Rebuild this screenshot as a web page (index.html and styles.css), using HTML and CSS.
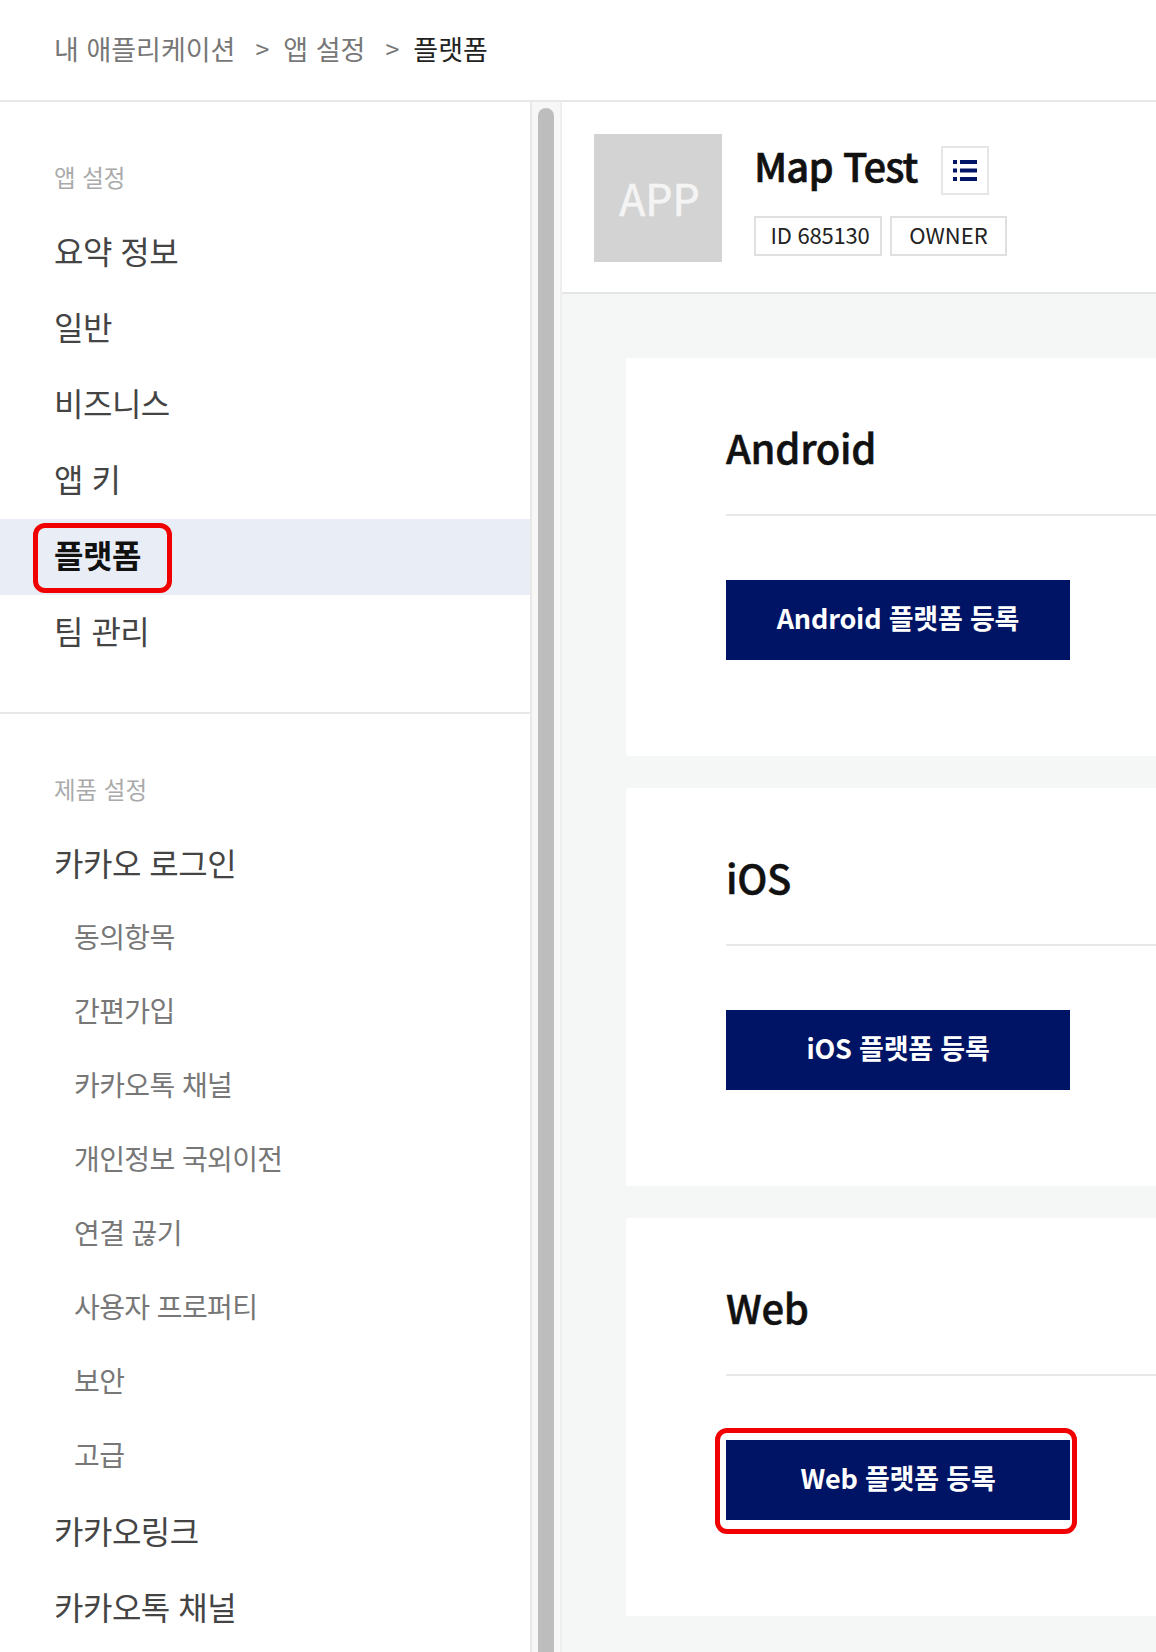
FILE: index.html
```html
<!DOCTYPE html>
<html lang="ko">
<head>
    <meta charset="UTF-8">
    <meta name="viewport" content="width=device-width, initial-scale=1.0">
    <title>플랫폼</title>
    <link rel="stylesheet" href="styles.css">
</head>
<body>
    <div class="breadcrumb">
        <span>내 애플리케이션</span>
        <span class="sep">&gt;</span>
        <span>앱 설정</span>
        <span class="sep">&gt;</span>
        <span class="current">플랫폼</span>
    </div>

    <div class="layout">
        <div class="sidebar">
            <div class="nav-section first">
                <div class="nav-label">앱 설정</div>
                <div class="nav-item">요약 정보</div>
                <div class="nav-item">일반</div>
                <div class="nav-item">비즈니스</div>
                <div class="nav-item">앱 키</div>
                <div class="nav-item active">플랫폼<span class="mark mark-nav"></span></div>
                <div class="nav-item">팀 관리</div>
            </div>
            <div class="nav-section">
                <div class="nav-label">제품 설정</div>
                <div class="nav-item">카카오 로그인</div>
                <div class="nav-sub">
                    <div class="sub-item">동의항목</div>
                    <div class="sub-item">간편가입</div>
                    <div class="sub-item">카카오톡 채널</div>
                    <div class="sub-item">개인정보 국외이전</div>
                    <div class="sub-item">연결 끊기</div>
                    <div class="sub-item">사용자 프로퍼티</div>
                    <div class="sub-item">보안</div>
                    <div class="sub-item">고급</div>
                </div>
                <div class="nav-item">카카오링크</div>
                <div class="nav-item">카카오톡 채널</div>
            </div>
        </div>

        <div class="scroll-track"><div class="scroll-thumb"></div></div>

        <div class="main">
            <div class="app-header">
                <div class="app-icon">APP</div>
                <div class="app-info">
                    <div class="app-title">
                        <h1>Map Test</h1>
                        <div class="list-button">
                            <svg width="24" height="21" viewBox="0 0 24 21">
                                <path fill="#001466" d="M0 0h4v4H0zM7 0h17v4H7zM0 8.500h4v4H0zM7 8.500h17v4H7zM0 17h4v4H0zM7 17h17v4H7z"/>
                            </svg>
                        </div>
                    </div>
                    <div class="tags">
                        <span class="tag tag-id">ID 685130</span>
                        <span class="tag tag-owner">OWNER</span>
                    </div>
                </div>
            </div>

            <div class="content">
                <div class="card">
                    <h2>Android</h2>
                    <div class="card-body">
                        <div class="register">Android 플랫폼 등록</div>
                    </div>
                </div>
                <div class="card">
                    <h2>iOS</h2>
                    <div class="card-body">
                        <div class="register">iOS 플랫폼 등록</div>
                    </div>
                </div>
                <div class="card">
                    <h2>Web</h2>
                    <div class="card-body">
                        <div class="register">Web 플랫폼 등록<span class="mark mark-button"></span></div>
                    </div>
                </div>
            </div>
        </div>
    </div>
</body>
</html>
```

FILE: styles.css
```css
* {
    box-sizing: border-box;
}
html, body {
    margin: 0;
    height: 1652px;
    overflow: hidden;
}
body {
    font-family: "Noto Sans CJK KR", "Noto Sans", sans-serif;
    background-color: #fff;
    color: #111;
}

.breadcrumb {
    display: flex;
    align-items: center;
    height: 102px;
    padding: 0 0 4px 54px;
    border-bottom: 2px solid #e8e8e8;
    font-size: 27px;
    color: #777;
}
.breadcrumb .sep {
    margin: 0 14px 0 20px;
    font-size: 25px;
}
.breadcrumb .current {
    color: #222;
}

.layout {
    display: flex;
    height: 1550px;
}

.sidebar {
    width: 532px;
    flex-shrink: 0;
    border-right: 2px solid #e8e8e8;
}
.nav-section {
    padding-top: 55px;
}
.nav-section.first {
    padding-bottom: 41px;
    border-bottom: 2px solid #e8e8e8;
}
.nav-label {
    height: 40px;
    line-height: 40px;
    margin-bottom: 18px;
    padding-left: 54px;
    font-size: 23.500px;
    color: #aaa;
}
.nav-item {
    position: relative;
    height: 76px;
    line-height: 70px;
    padding-left: 54px;
    font-size: 32px;
    letter-spacing: -0.5px;
    color: #444;
}
.nav-item.active {
    background-color: #e9edf5;
    font-weight: 700;
    color: #111;
}
.nav-sub {
    margin-top: -4px;
    margin-bottom: 4px;
}
.sub-item {
    height: 74px;
    line-height: 74px;
    padding-left: 74px;
    font-size: 28px;
    letter-spacing: -0.6px;
    color: #777;
}

.scroll-track {
    width: 30px;
    flex-shrink: 0;
    padding: 6px 0 0 6px;
    background-color: #f7f7f7;
    border-right: 2px solid #efefef;
}
.scroll-thumb {
    width: 16px;
    height: 100%;
    background-color: #bdbdbd;
    border-radius: 8px 8px 0 0;
}

.main {
    flex: 1;
    min-width: 0;
    background-color: #f5f7f7;
}
.app-header {
    display: flex;
    height: 192px;
    padding: 32px 0 0 32px;
    background-color: #fff;
    border-bottom: 2px solid #e4e6e6;
}
.app-icon {
    width: 128px;
    height: 128px;
    padding-left: 3px;
    line-height: 126px;
    background-color: #d3d3d3;
    color: #f4f4f4;
    text-align: center;
    font-size: 43px;
    -webkit-text-stroke: 0.6px #f4f4f4;
}
.app-info {
    margin-left: 32px;
}
.app-title {
    display: flex;
    align-items: center;
    height: 72px;
    margin-bottom: 10px;
}
.app-title h1 {
    margin: 0 0 10px;
    font-size: 40px;
    font-weight: 500;
    line-height: 60px;
    letter-spacing: -0.9px;
    -webkit-text-stroke: 0.6px #111;
}
.list-button {
    display: flex;
    align-items: center;
    justify-content: center;
    width: 48px;
    height: 49px;
    margin-left: 23px;
    border: 2px solid #e6e6e6;
}
.tags {
    display: flex;
    gap: 8px;
}
.tag {
    display: block;
    height: 40px;
    line-height: 32px;
    border: 2px solid #e0e0e0;
    text-align: center;
    font-size: 22px;
    color: #222;
}
.tag-id {
    width: 128px;
    padding-left: 4px;
    letter-spacing: -0.2px;
}
.tag-owner {
    width: 117px;
}

.content {
    display: flex;
    flex-direction: column;
    gap: 32px;
    width: 900px;
    padding: 64px 0 0 64px;
}
.card {
    height: 398px;
    padding: 0 0 0 100px;
    background-color: #fff;
    border-radius: 3px;
}
.card h2 {
    margin: 0;
    height: 158px;
    padding-top: 54px;
    border-bottom: 2px solid #e8e8e8;
    font-size: 40px;
    font-weight: 500;
    line-height: 70px;
    letter-spacing: -0.3px;
    -webkit-text-stroke: 0.5px #111;
}
.card-body {
    padding-top: 64px;
}
.register {
    position: relative;
    width: 344px;
    height: 80px;
    line-height: 76px;
    background-color: #001466;
    color: #fff;
    text-align: center;
    font-size: 27px;
    font-weight: 700;
    letter-spacing: -0.2px;
}

/* red annotation boxes drawn over the screenshot */
.mark {
    position: absolute;
    border: 5px solid #f00000;
    border-radius: 12px;
}
.mark-nav {
    left: 33px;
    top: 4px;
    width: 139px;
    height: 70px;
}
.mark-button {
    left: -11px;
    top: -12px;
    width: 362px;
    height: 106px;
}
```
